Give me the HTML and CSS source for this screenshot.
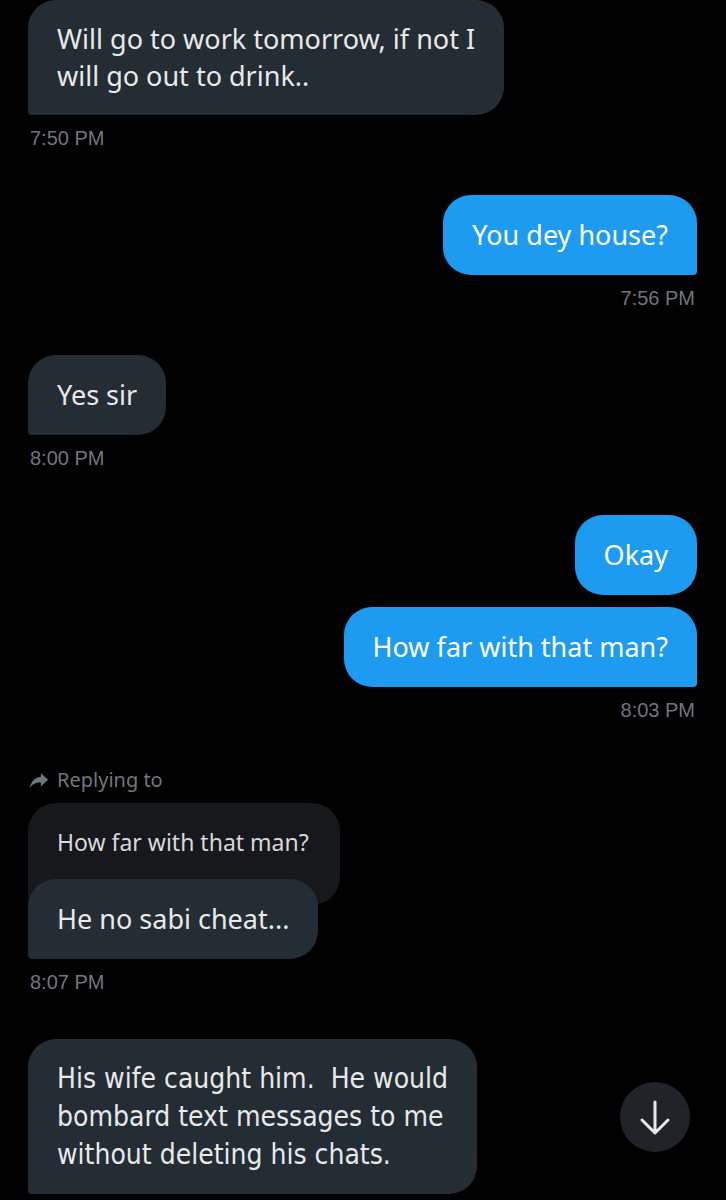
FILE: index.html
```html
<!DOCTYPE html>
<html>
<head>
<title>Chat</title>
<meta name="viewport" content="width=device-width, initial-scale=1.0">
<link rel="stylesheet" href="styles.css">
</head>
<body>

<main class="chat">

<div class="group in">
<div class="bubble first">Will go to work tomorrow, if not I<br>will go out to drink..</div>
<div class="time">7:50 PM</div>
</div>

<div class="group out">
<div class="bubble">You dey house?</div>
<div class="time">7:56 PM</div>
</div>

<div class="group in">
<div class="bubble">Yes sir</div>
<div class="time">8:00 PM</div>
</div>

<div class="group out">
<div class="bubble round">Okay</div>
<div class="bubble">How far with that man?</div>
<div class="time">8:03 PM</div>
</div>

<div class="group in">
<div class="replying">
<svg viewBox="0 0 24 24" width="22" height="22"><path d="M14 8.5V4.5l8 7.2-8 7.3v-4.2c-5.5 0-9.2 1.7-12 5.7 1.1-5.8 4.6-11.1 12-12z" fill="#71767b"/></svg>
<span>Replying to</span>
</div>
<div class="quote">How far with that man?</div>
<div class="bubble reply">He no sabi cheat...</div>
<div class="time">8:07 PM</div>
</div>

<div class="group in">
<div class="bubble narrow">His wife caught him.&nbsp; He would<br>bombard text messages to me<br>without deleting his chats.</div>
</div>

</main>

<button class="scroll-down">
<svg viewBox="0 0 70 70" width="70" height="70"><path d="M35 20v30M22 38l13 13 13-13" fill="none" stroke="#e7e9ea" stroke-width="3" stroke-linecap="round" stroke-linejoin="round"/></svg>
</button>

</body>
</html>
```

FILE: styles.css
```css
body {
   background: #000;
   color: #e7e9ea;
   font-family: "Noto Sans", sans-serif;
   margin: 0;}

.chat {
   display: flex;
   flex-direction: column;
   gap: 44px;
   padding: 0 29px 0 28px;}

.group {
   display: flex;
   flex-direction: column;
   gap: 10px;}

.group.in {
   align-items: flex-start;}

.group.out {
   align-items: flex-end;}

.bubble {
   background: #242c34;
   border-radius: 28px 28px 28px 4px;
   font-size: 27px;
   line-height: 38px;
   padding: 21px 29px;}

.bubble.first {
   line-height: 37px;
   padding-top: 20px;}

.out .bubble {
   background: #1d9bf0;
   border-radius: 28px 28px 4px 28px;
   color: #fff;}

.out .bubble.round {
   border-radius: 28px;
   margin-bottom: 2px;}

.time {
   color: #71767b;
   font-family: "Liberation Sans", Arial, sans-serif;
   font-size: 20px;
   line-height: 26px;
   padding: 0 2px;}

.replying {
   align-items: center;
   color: #71767b;
   display: flex;
   font-size: 20px;
   gap: 7px;
   line-height: 26px;}

.quote {
   background: #16181c;
   border-radius: 28px 28px 28px 4px;
   color: #d6d9db;
   font-size: 23px;
   line-height: 30px;
   padding: 24px 29px 48px 29px;
   width: 254px;
   white-space: nowrap;}

.bubble.reply {
   margin-top: -36px;
   position: relative;}

.bubble.narrow {
   font-family: "DejaVu Sans", sans-serif;
   font-size: 28px;
   font-stretch: condensed;
   line-height: 38px;
   padding-bottom: 20px;}

.scroll-down {
   background: #202327;
   border: none;
   border-radius: 50%;
   left: 620px;
   padding: 0;
   position: absolute;
   top: 1082px;
   height: 70px; width: 70px;}

.scroll-down svg {
   display: block;}
```
